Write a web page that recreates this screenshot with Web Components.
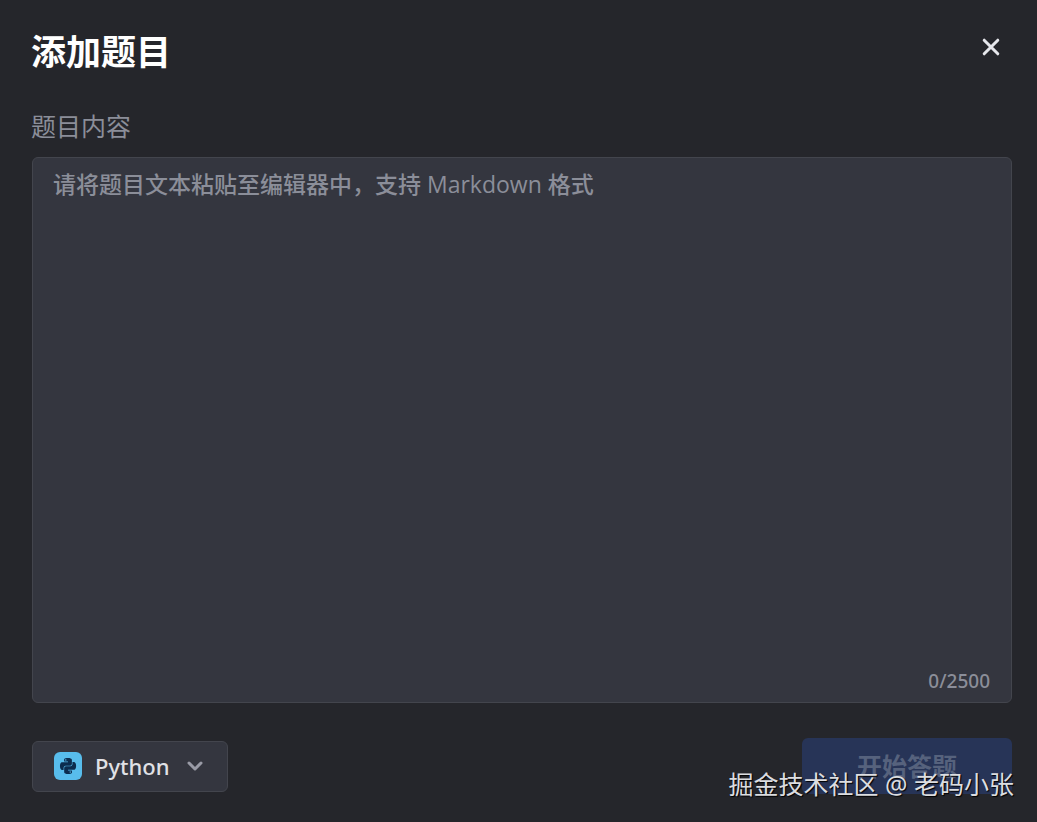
<!DOCTYPE html>
<html lang="zh-CN">
<head>
<meta charset="utf-8">
<meta name="viewport" content="width=device-width, initial-scale=1">
<title>添加题目</title>
<style>
  body {
    margin: 0;
    background: #25262b;
    color: #fff;
    font-family: "Noto Sans", "Noto Sans CJK SC", sans-serif;
  }
</style>
</head>
<body>
<question-dialog>
  <dialog-header slot="header">添加题目</dialog-header>
  <question-editor label="题目内容" placeholder="请将题目文本粘贴至编辑器中，支持 Markdown 格式" limit="2500"></question-editor>
  <language-picker slot="footer"></language-picker>
  <submit-button slot="footer">开始答题</submit-button>
</question-dialog>
<credit-mark>掘金技术社区 @ 老码小张</credit-mark>

<script>
  class BaseElement extends HTMLElement {
    connectedCallback() {
      if (this.shadowRoot) return;
      this.attachShadow({ mode: "open" }).innerHTML = this.render();
      this.ready();
    }
    ready() {}
  }

  customElements.define("question-dialog", class extends BaseElement {
    render() {
      return `
        <style>
          :host { display: flex; flex-direction: column; box-sizing: border-box; min-height: 100vh; padding: 28px 25px 28px 31px; }
          main { display: flex; flex: 1; flex-direction: column; }
          footer { display: flex; align-items: center; justify-content: space-between; padding: 35px 0 0 1px; }
        </style>
        <slot name="header"></slot>
        <main><slot></slot></main>
        <footer><slot name="footer"></slot></footer>`;
    }
  });

  customElements.define("dialog-header", class extends BaseElement {
    render() {
      return `
        <style>
          :host { display: flex; align-items: flex-start; justify-content: space-between; }
          h1 { margin: 0; font-size: 35px; line-height: 48px; font-weight: 700; }
          button { display: flex; padding: 8px; margin: 0 7px; border: 0; background: none; color: #e6e7ec; cursor: pointer; }
          svg { display: block; width: 22px; height: 22px; margin: 0 -5px; }
        </style>
        <h1><slot></slot></h1>
        <button type="button" aria-label="关闭">
          <svg viewBox="0 0 22 22" fill="none" stroke="currentColor" stroke-width="3" stroke-linecap="round"><path d="M4.2 4.2 17.8 17.8M17.8 4.2 4.2 17.8"/></svg>
        </button>`;
    }
  });

  customElements.define("question-editor", class extends BaseElement {
    render() {
      return `
        <style>
          :host { display: flex; flex: 1; flex-direction: column; padding-top: 32px; }
          label { color: #8b8e99; font-size: 25px; line-height: 36px; padding-bottom: 13px; }
          .box { display: flex; flex: 1; flex-direction: column; box-sizing: border-box; margin-left: 1px; border: 1px solid #43454d; border-radius: 6px; background: #34363f; padding: 9px 21px 5px 20px; }
          textarea { flex: 1; width: 100%; box-sizing: border-box; padding: 0; border: 0; outline: 0; resize: none; background: none; color: #e0e1e6; font: 500 23px/34px "Open Sans", "Noto Sans CJK SC", sans-serif; }
          textarea::placeholder { color: #8b8e99; opacity: 1; }
          output { align-self: flex-end; color: #8b8e99; font-size: 19px; line-height: 32px; font-weight: 500; }
        </style>
        <label for="content">${this.getAttribute("label")}</label>
        <div class="box">
          <textarea id="content" maxlength="${this.getAttribute("limit")}" placeholder="${this.getAttribute("placeholder")}"></textarea>
          <output for="content">0/${this.getAttribute("limit")}</output>
        </div>`;
    }
    ready() {
      const area = this.shadowRoot.querySelector("textarea");
      const count = this.shadowRoot.querySelector("output");
      area.addEventListener("input", () => {
        count.textContent = area.value.length + "/" + this.getAttribute("limit");
      });
    }
  });

  customElements.define("language-picker", class extends BaseElement {
    render() {
      return `
        <style>
          :host { display: grid; align-items: center; width: 196px; }
          select, svg { grid-area: 1 / 1; }
          select { appearance: none; box-sizing: border-box; width: 100%; height: 51px; margin: 0; padding: 0 48px 0 62px; border: 1px solid #43454d; border-radius: 6px; background: #34363f; color: #e0e1e6; font: 500 22px/34px "Noto Sans", "Noto Sans CJK SC", sans-serif; cursor: pointer; }
          svg { pointer-events: none; z-index: 1; }
          .logo { width: 28px; height: 28px; margin-left: 22px; }
          .arrow { width: 18px; height: 12px; justify-self: end; margin-right: 24px; }
        </style>
        <select aria-label="编程语言">
          <option>Python</option>
          <option>Java</option>
          <option>C++</option>
        </select>
        <svg class="logo" viewBox="0 0 28 28" aria-hidden="true">
          <rect width="28" height="28" rx="6" fill="#58bdec"/>
          <g transform="translate(6 6) scale(.667)" fill="#0c2d4f">
            <path d="M14.25.18l.9.2.73.26.59.3.45.32.34.34.25.34.16.33.1.3.04.26.02.2-.01.13V8.5l-.05.63-.13.55-.21.46-.26.38-.3.31-.33.25-.35.19-.35.14-.33.1-.3.07-.26.04-.21.02H8.77l-.69.05-.59.14-.5.22-.41.27-.33.32-.27.35-.2.36-.15.37-.1.35-.07.32-.04.27-.02.21v3.06H3.17l-.21-.03-.28-.07-.32-.12-.35-.18-.36-.26-.36-.36-.35-.46-.32-.59-.28-.73-.21-.88-.14-1.05-.05-1.23.06-1.22.16-1.04.24-.87.32-.71.36-.57.4-.44.42-.33.42-.24.4-.16.36-.1.32-.05.24-.01h.16l.06.01h8.16v-.83H6.18l-.01-2.75-.02-.37.05-.34.11-.31.17-.28.25-.26.31-.23.38-.2.44-.18.51-.15.58-.12.64-.1.71-.06.77-.04.84-.02 1.27.05zm-6.3 1.98l-.23.33-.08.41.08.41.23.34.33.22.41.09.41-.09.33-.22.23-.34.08-.41-.08-.41-.23-.33-.33-.22-.41-.09-.41.09z"/>
            <path d="M21.1 6.11l.28.06.32.12.35.18.36.27.36.35.35.47.32.59.28.73.21.88.14 1.04.05 1.23-.06 1.23-.16 1.04-.24.86-.32.71-.36.57-.4.45-.42.33-.42.24-.4.16-.36.09-.32.05-.24.02-.16-.01h-8.22v.82h5.84l.01 2.76.02.36-.05.34-.11.31-.17.29-.25.25-.31.24-.38.2-.44.17-.51.15-.58.13-.64.09-.71.07-.77.04-.84.01-1.27-.04-1.07-.14-.9-.2-.73-.25-.59-.3-.45-.33-.34-.34-.25-.34-.16-.33-.1-.3-.04-.25-.02-.2.01-.13v-5.34l.05-.64.13-.54.21-.46.26-.38.3-.32.33-.24.35-.2.35-.14.33-.1.3-.06.26-.04.21-.02.13-.01h5.84l.69-.05.59-.14.5-.21.41-.28.33-.32.27-.35.2-.36.15-.36.1-.35.07-.32.04-.28.02-.21V6.07h2.09l.14.01zm-6.47 14.25l-.23.33-.08.41.08.41.23.33.33.23.41.08.41-.08.33-.23.23-.33.08-.41-.08-.41-.23-.33-.33-.23-.41-.08-.41.08z"/>
          </g>
        </svg>
        <svg class="arrow" viewBox="0 0 18 12" fill="none" stroke="#999ba6" stroke-width="3" stroke-linecap="round" stroke-linejoin="round" aria-hidden="true"><path d="m3 3 6 6 6-6"/></svg>`;
    }
  });

  customElements.define("submit-button", class extends BaseElement {
    render() {
      return `
        <style>
          :host { display: block; }
          button { display: block; width: 210px; height: 56px; padding: 0; border: 0; border-radius: 6px; background: #273457; color: #56627d; font: 700 25px/36px "Noto Sans", "Noto Sans CJK SC", sans-serif; }
        </style>
        <button type="button" disabled><slot></slot></button>`;
    }
  });

  customElements.define("credit-mark", class extends BaseElement {
    render() {
      return `
        <style>
          :host { display: block; position: absolute; right: 23px; bottom: 20px; color: #dcdde0; font-size: 25px; line-height: 36px; white-space: nowrap; text-shadow: 1px 1px 1px #000; pointer-events: none; }
        </style>
        <slot></slot>`;
    }
  });
</script>
</body>
</html>
